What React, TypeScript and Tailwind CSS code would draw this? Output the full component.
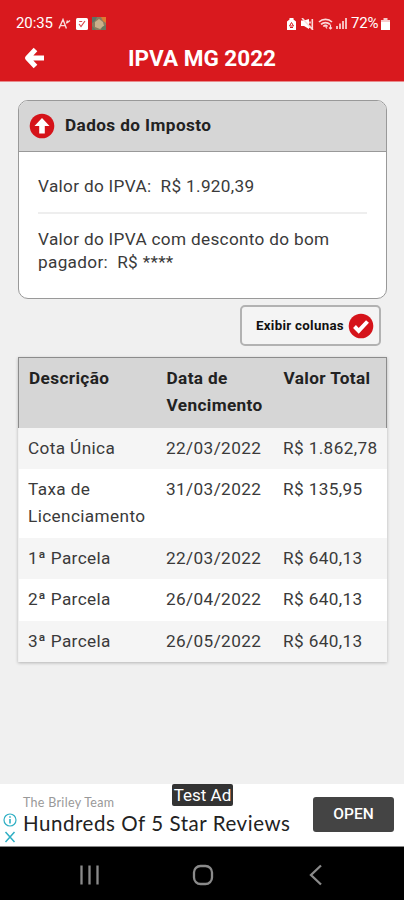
import React from "react";

const rows = [
  { description: "Cota Única", dueDate: "22/03/2022", total: "R$ 1.862,78" },
  { description: "Taxa de Licenciamento", dueDate: "31/03/2022", total: "R$ 135,95" },
  { description: "1ª Parcela", dueDate: "22/03/2022", total: "R$ 640,13" },
  { description: "2ª Parcela", dueDate: "26/04/2022", total: "R$ 640,13" },
  { description: "3ª Parcela", dueDate: "26/05/2022", total: "R$ 640,13" },
];

export default function App() {
  return (
    <div className="flex h-[900px] w-[404px] flex-col overflow-hidden bg-[#f0f0f0] font-[Roboto,sans-serif] text-[#3a3a3a]">
      <header className="h-[82px] shrink-0 border-b border-[#e88a8c] bg-[#d9191e] text-white">
        <StatusBar />
        <div className="grid h-[46px] grid-cols-[68px_1fr_68px] items-center">
          <button aria-label="Voltar" className="pl-[24px]">
            <BackIcon />
          </button>
          <h1 className="text-center text-[22.5px] leading-[26px] font-bold">
            IPVA MG 2022
          </h1>
        </div>
      </header>

      <main className="flex flex-1 flex-col px-[18px] pt-[18px]">
        <TaxCard />
        <div className="mt-[6px] flex justify-end pr-[5px]">
          <button className="flex h-[41px] w-[141px] items-center justify-between rounded-[5px] border-2 border-[#b2b2b2] bg-[#f4f4f4] pr-[5px] pl-[14px]">
            <span className="text-[13.3px] font-bold tracking-[0.3px] whitespace-nowrap text-[#111]">
              Exibir colunas
            </span>
            <CheckIcon />
          </button>
        </div>
        <TaxTable />
      </main>

      <AdBanner />
      <NavigationBar />
    </div>
  );
}

const StatusBar = () => {
  return (
    <div className="flex h-[35px] items-end justify-between pr-[14px] pl-4 text-[15px]">
      <div className="flex h-[23px] items-center">
        <span className="w-[38px] tracking-[-0.1px]">20:35</span>
        <svg viewBox="0 0 13 12" className="ml-[4px] h-3 w-[13px]" fill="none" stroke="#f9dcdc" strokeWidth="1.4">
          <path d="M1 10.5 5 1.5l3.4 9M2.3 7.6h4.9M8.5 5.5l1-3M9.5 4.5l2.5-2" />
        </svg>
        <svg viewBox="0 0 12 12" className="ml-[5px] size-3">
          <rect width="12" height="12" rx="1.5" fill="#fff" />
          <path d="m3 6 2 2.5L9 3M3.2 3.5h3" fill="none" stroke="#d9474b" strokeWidth="1.2" />
        </svg>
        <svg viewBox="0 0 14 13" className="ml-[4px] h-[13px] w-[14px]">
          <rect width="14" height="13" fill="#8b7a5e" />
          <path d="M0 0h5L3 4 0 6z" fill="#5d7366" />
          <path d="M9 0h5v6l-3-2z" fill="#e07b32" />
          <path d="m3 5 4-3 4 3 1 4-4 3-5-2z" fill="#c9b08a" />
          <path d="m0 9 4 4H0zM10 10l4-2v5H9z" fill="#66785f" />
        </svg>
      </div>
      <div className="flex h-[23px] items-center">
        <svg viewBox="0 0 9 12" className="h-3 w-[9px]">
          <path d="M2.5 0h4v1.5L9 3.5V12H0V3.5l2.5-2z" fill="#fff" />
          <path d="m4.5 4.5 2 3.5h-4zM3 9.5h3" fill="none" stroke="#d9191e" />
        </svg>
        <svg viewBox="0 0 13 12" className="ml-[5px] h-3 w-[13px]">
          <path d="M0 2.5h3L8 1v10L3 8H0z" fill="#fff" />
          <path d="m1 0 11 12M9 3.5v2M11.3 1v10M8.8 7.5V10" fill="none" stroke="#fbdada" strokeWidth="1.6" />
        </svg>
        <svg viewBox="0 0 16 12" className="ml-[4px] h-3 w-4" fill="none" stroke="#fbdada" strokeWidth="1.7">
          <path d="M1 4c3.500-3.500 9.500-3.500 13 0M3 6.300c2.500-2.300 6.500-2.300 9 0M5.300 8.500c1.300-1.200 3-1.200 4.300 0" />
          <path d="m7.5 8.5 1.5 2M12.5 11V6.500M11 9.500l1.500 1.500L14 9.500" strokeWidth="1.2" />
        </svg>
        <svg viewBox="0 0 11 11" className="ml-[2px] h-[11px] w-[11px]" fill="#f5bcbe">
          <path d="M0 8h2v3H0zM3 5.500h2V11H3zM6 3h2v8H6zM9 0h2v11H9z" />
        </svg>
        <span className="ml-[4px] w-[27px] tracking-[-0.2px] whitespace-nowrap">72%</span>
        <svg viewBox="0 0 9 12" className="ml-[3px] h-3 w-[9px]">
          <path d="M2.5 0h4v2H9v10H0V2h2.5z" fill="#f7c9ca" />
          <path d="M0 4h9v8H0z" fill="#fff" />
        </svg>
      </div>
    </div>
  );
};

const TaxCard = () => {
  return (
    <section className="h-[199px] w-[369px] overflow-hidden rounded-[10px] border border-[#999] bg-white">
      <h2 className="flex h-[51px] items-center gap-[10px] border-b border-[#999] bg-[#d6d6d6] pl-[10px] text-[17.2px] font-bold tracking-[0.4px] text-[#222]">
        <ArrowUpIcon />
        Dados do Imposto
      </h2>
      <div className="px-[19px] text-[17.2px] leading-[23px] tracking-[0.32px]">
        <p className="flex h-[62px] items-center border-b-2 border-[#eee] pt-[8px] whitespace-pre">
          Valor do IPVA:  R$ 1.920,39
        </p>
        <p className="pt-[14px]">
          Valor do IPVA com desconto do bom pagador: &nbsp;R$ ****
        </p>
      </div>
    </section>
  );
};

const TaxTable = () => {
  return (
    <table className="mt-[11px] w-[369px] table-fixed border-collapse text-left text-[17.2px] leading-[27px] tracking-[0.38px] shadow-[0_1px_3px_rgba(0,0,0,0.25)]">
      <thead className="border border-b-0 border-[#8c8c8c] bg-[#d6d6d6] text-[#222]">
        <tr className="h-[70px] align-top">
          <th className="w-[138px] pt-[7px] pl-[10px] font-bold">Descrição</th>
          <th className="w-[117px] pt-[7px] pl-[10px] font-bold">Data de Vencimento</th>
          <th className="pt-[7px] pl-[10px] font-bold whitespace-nowrap">Valor Total</th>
        </tr>
      </thead>
      <tbody>
        {rows.map((row) => (
          <tr key={row.description} className="bg-white align-top odd:bg-[#f5f5f5]">
            <td className="py-[7.25px] pl-[9.5px]">{row.description}</td>
            <td className="py-[7.25px] pl-[9.5px]">{row.dueDate}</td>
            <td className="py-[7.25px] pl-[9.5px] whitespace-nowrap">{row.total}</td>
          </tr>
        ))}
      </tbody>
    </table>
  );
};

const AdBanner = () => {
  return (
    <aside className="relative flex h-[63px] shrink-0 items-start justify-between border-b border-[#888] bg-white pr-[10px] pl-[3px]">
      <div className="flex">
        <div className="flex w-[20px] flex-col gap-[4px] pt-[29px]">
          <svg viewBox="0 0 14 14" className="size-[14px]" fill="none" stroke="#2fafc4" strokeWidth="1.2">
            <circle cx="7" cy="7" r="6" />
            <path d="M7 6v4.500M7 3.300v1.500" strokeWidth="1.6" />
          </svg>
          <svg viewBox="0 0 14 12" className="h-3 w-[14px]" fill="none" stroke="#2fafc4" strokeWidth="1.5">
            <path d="m2.5 1 9 10M11.5 1l-9 10" />
          </svg>
        </div>
        <div className="pt-[10px] font-[Lato,sans-serif]">
          <p className="text-[12.5px] leading-[18px] tracking-[0.3px] text-[#999]">The Briley Team</p>
          <p className="text-[20.5px] leading-[22px] tracking-[0.55px] whitespace-nowrap text-[#222]">
            Hundreds Of 5 Star Reviews
          </p>
        </div>
      </div>
      <button className="mt-[13px] h-[35px] w-[81px] rounded-[3px] bg-[#444] text-[15.5px] font-medium text-white">
        OPEN
      </button>
      <span className="absolute top-0 left-[172px] h-[22px] w-[61px] rounded-[2px] bg-[#333] text-center text-[17px] leading-[23px] whitespace-nowrap text-white">
        Test Ad
      </span>
    </aside>
  );
};

const NavigationBar = () => {
  return (
    <nav className="h-[53px] shrink-0 bg-black">
      <svg viewBox="0 0 404 53" className="h-[53px] w-[404px]" fill="none" stroke="#8a8a8a" strokeWidth="2.3">
        <path d="M81.500 18.500v19M89.500 18.500v19M97.500 18.500v19" />
        <rect x="194" y="19" width="18" height="18" rx="6.5" />
        <path d="m321 18.500-10 9.500 10 9.500" />
      </svg>
    </nav>
  );
};

const BackIcon = () => {
  return (
    <svg viewBox="0 0 20 22" className="h-[22px] w-5" fill="none" stroke="#fff" strokeWidth="5" strokeLinejoin="round">
      <path d="M11.500 2.500 3.500 11l8 8.500M4 11h16" />
    </svg>
  );
};

const ArrowUpIcon = () => {
  return (
    <svg viewBox="0 0 26 26" className="size-[26px]">
      <circle cx="13" cy="13" r="12.3" fill="#d5131a" />
      <path d="m13 5 7.500 8h-4.700v7.500h-5.600V13H5.500z" fill="#fff" />
    </svg>
  );
};

const CheckIcon = () => {
  return (
    <svg viewBox="0 0 26 26" className="size-[26px] shrink-0">
      <circle cx="13" cy="13" r="12.3" fill="#d5131a" />
      <path d="m6.500 13.500 4.200 4.300 8.800-9.300" fill="none" stroke="#fff" strokeWidth="4" />
    </svg>
  );
};
